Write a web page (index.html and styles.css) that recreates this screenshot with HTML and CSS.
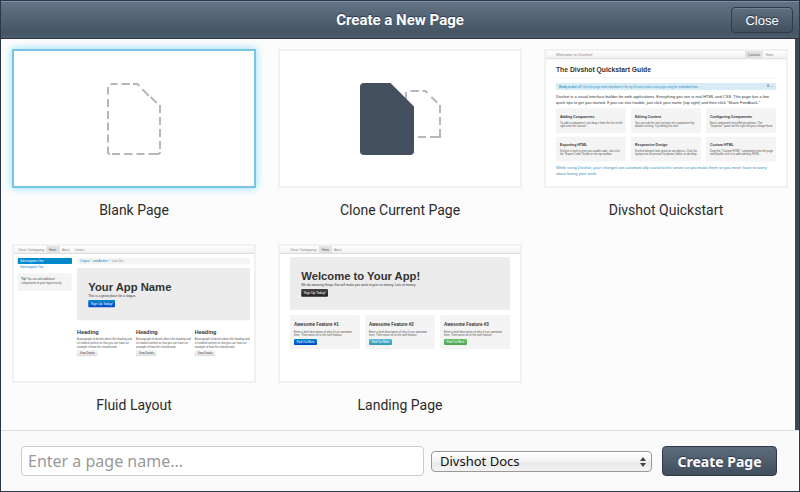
FILE: index.html
```html
<!DOCTYPE html>
<html lang="en">
<head>
<meta charset="utf-8">
<title>Create a New Page</title>
<link rel="stylesheet" href="styles.css">
</head>
<body>
<form class="dialog">
  <header class="titlebar">
    <h1 class="title">Create a New Page</h1>
    <button class="close" type="button">Close</button>
  </header>

  <main class="templates">
    <label class="card">
      <input class="pick" type="radio" name="template" checked>
      <svg class="thumb" viewBox="0 0 240 135" aria-hidden="true">
        <path class="dash" d="M94 36v7.500M94 48v8M94 60v8M94 71.500v8M94 83.500v8M94 95.500v5.500q0 2 2 2M96.500 33h7M107.500 33h8.500M119 33h4.500l2 2M128.300 38.300l6.400 6.400M136.700 46l6 6M146 54v8M146 66v8M146 78v8M146 90v8M98 103h8M110 103h8.500M122.500 103h8M134.500 103h9.500q2 0 2-2"/>
      </svg>
      <span class="name">Blank Page</span>
    </label>

    <label class="card">
      <input class="pick" type="radio" name="template">
      <svg class="thumb" viewBox="0 0 240 135" aria-hidden="true">
        <path class="dash" d="M126 41v7.500M130.500 40h8.500M142.500 40h3l2 2M151.300 46l6 5.700M160 54v8M160 66v8M160 78v8h-10M138 86h8"/>
        <path class="solid" d="M84 32h26.500L134 55.500V100q0 4-4 4H84q-4 0-4-4V36q0-4 4-4z"/>
      </svg>
      <span class="name">Clone Current Page</span>
    </label>

    <label class="card">
      <input class="pick" type="radio" name="template">
      <svg class="thumb" viewBox="0 0 960 540" aria-hidden="true">
        <defs>
          <linearGradient id="nav" x2="0" y2="1"><stop stop-color="#fff"/><stop offset="1" stop-color="#f0f0f0"/></linearGradient>
          <linearGradient id="blue" x2="0" y2="1"><stop stop-color="#0088cc"/><stop offset="1" stop-color="#0044cc"/></linearGradient>
          <linearGradient id="dark" x2="0" y2="1"><stop stop-color="#444"/><stop offset="1" stop-color="#222"/></linearGradient>
          <linearGradient id="cyan" x2="0" y2="1"><stop stop-color="#5bc0de"/><stop offset="1" stop-color="#2f96b4"/></linearGradient>
          <linearGradient id="green" x2="0" y2="1"><stop stop-color="#62c462"/><stop offset="1" stop-color="#51a351"/></linearGradient>
          <linearGradient id="plain" x2="0" y2="1"><stop stop-color="#fff"/><stop offset="1" stop-color="#dedede"/></linearGradient>
        </defs>
        <rect width="960" height="30" fill="url(#nav)"/><rect y="29" width="960" height="4" fill="#dcdcdc"/>
        <rect x="796" width="71" height="29" fill="#e2e2e2"/>
        <text class="t16 grey" x="40" y="20">Welcome to Divshot!</text>
        <text class="t11 mid" x="807" y="18">Quickstart</text>
        <text class="t11 grey" x="879" y="18">Home</text>
        <text class="t27 bold" x="40" y="85">The Divshot Quickstart Guide</text>
        <rect x="40" y="106" width="880" height="2" fill="#eee"/>
        <rect class="notice" x="40" y="128" width="880" height="28" rx="4"/>
        <text class="t11 teal" x="52" y="146"><tspan class="bold">Ready to dive in?</tspan> Click the page name dropdown in the top left and create a new page using the embedded form.</text>
        <text class="t16 grey" x="883" y="145">Ã—</text>
        <text class="t16" x="40" y="189">Divshot is a visual interface builder for web applications. Everything you see is real HTML and CSS. This page has a few</text>
        <text class="t16" x="40" y="211">quick tips to get you started. If you run into trouble, just click your name (top right) and then click "Share Feedback."</text>
        <g class="wells">
          <rect x="40" y="229" width="280" height="99" rx="4"/><rect x="340" y="229" width="280" height="99" rx="4"/><rect x="640" y="229" width="280" height="99" rx="4"/>
          <rect x="40" y="343" width="280" height="99" rx="4"/><rect x="340" y="343" width="280" height="99" rx="4"/><rect x="640" y="343" width="280" height="99" rx="4"/>
        </g>
        <g class="t14 bold">
          <text x="56" y="266">Adding Components</text><text x="356" y="266">Editing Content</text><text x="656" y="266">Configuring Components</text>
          <text x="56" y="378">Exporting HTML</text><text x="356" y="378">Responsive Design</text><text x="656" y="378">Custom HTML</text>
        </g>
        <g class="t11 body">
          <text x="56" y="290">To add a component, just drag it from the list on the</text><text x="56" y="305">right onto the canvas.</text>
          <text x="356" y="290">You can edit the text sections of a component by</text><text x="356" y="305">double-clicking. Try editing this text!</text>
          <text x="656" y="290">Each component has different options. The</text><text x="656" y="305">"Inspector" panel on the right lets you change them.</text>
          <text x="56" y="402">Divshot is built to give you usable code. Just click</text><text x="56" y="417">the "Export Code" button in the top toolbar.</text>
          <text x="356" y="402">Divshot designs look great on any device. Click the</text><text x="356" y="417">laptop icon to preview for phone, tablet, or desktop.</text>
          <text x="656" y="402">Drag the "Custom HTML" component onto the page</text><text x="656" y="417">and double click it to add arbitrary HTML.</text>
        </g>
        <text class="t16 teal" x="40" y="473">While using Divshot, your changes are automatically saved to the server as you make them so you never have to worry</text>
        <text class="t16 teal" x="40" y="495">about losing your work.</text>
      </svg>
      <span class="name">Divshot Quickstart</span>
    </label>

    <label class="card">
      <input class="pick" type="radio" name="template">
      <svg class="thumb" viewBox="0 0 960 540" aria-hidden="true">
        <rect width="960" height="28" fill="url(#nav)"/><rect y="28" width="960" height="4" fill="#dcdcdc"/>
        <rect x="129" width="55" height="28" fill="#e2e2e2"/>
        <text class="t16 grey" x="16" y="21">Your Company</text>
        <text class="t11 mid" x="140" y="19">Home</text><text class="t11 grey" x="192" y="19">About</text><text class="t11 grey" x="243" y="19">Contact</text>
        <rect x="15" y="48" width="217" height="24" rx="3" fill="#0088cc"/>
        <text class="t11 white" x="24" y="63">Subnavigation One</text>
        <text class="t11 link" x="24" y="88">Subnavigation Two</text>
        <g class="wells"><rect x="15" y="109" width="216" height="71" rx="5"/><rect x="252" y="47" width="692" height="26" rx="4"/></g>
        <text class="t11 body" x="29" y="137"><tspan class="bold">Tip!</tspan> You can add additional</text>
        <text class="t11 body" x="29" y="152">components to your layout easily.</text>
        <text class="t11 link" x="264" y="64">Original</text><text class="t11 grey" x="307" y="64">/</text><text class="t11 link" x="316" y="64">and Another</text><text class="t11 grey" x="382" y="64">/</text><text class="t11 grey" x="392" y="64">Last One</text>
        <rect class="hero" x="252" y="88" width="692" height="209" rx="6"/>
        <text class="t45 bold" x="297" y="180">Your App Name</text>
        <text class="t13" x="297" y="202">This is a great place for a slogan.</text>
        <rect x="297" y="216" width="107" height="29" rx="4" fill="url(#blue)"/>
        <text class="t13 white" x="307" y="235">Sign Up Today!</text>
        <g class="t22 bold"><text x="252" y="351">Heading</text><text x="488" y="351">Heading</text><text x="723" y="351">Heading</text></g>
        <g class="t11 body">
          <text x="252" y="377">A paragraph of details about the heading and</text><text x="252" y="392">its related content so that you can have an</text><text x="252" y="406">example of how this should work.</text>
          <text x="488" y="377">A paragraph of details about the heading and</text><text x="488" y="392">its related content so that you can have an</text><text x="488" y="406">example of how this should work.</text>
          <text x="723" y="377">A paragraph of details about the heading and</text><text x="723" y="392">its related content so that you can have an</text><text x="723" y="406">example of how this should work.</text>
        </g>
        <g class="plain"><rect x="252" y="418" width="81" height="22" rx="4"/><rect x="488" y="418" width="81" height="22" rx="4"/><rect x="723" y="418" width="81" height="22" rx="4"/></g>
        <g class="t11"><text x="263" y="433">View Details</text><text x="499" y="433">View Details</text><text x="734" y="433">View Details</text></g>
      </svg>
      <span class="name">Fluid Layout</span>
    </label>

    <label class="card">
      <input class="pick" type="radio" name="template">
      <svg class="thumb" viewBox="0 0 960 540" aria-hidden="true">
        <rect width="960" height="28" fill="url(#nav)"/><rect y="28" width="960" height="4" fill="#dcdcdc"/>
        <rect x="156" width="52" height="28" fill="#e2e2e2"/>
        <text class="t16 grey" x="41" y="21">Your Company</text>
        <text class="t11 mid" x="168" y="19">Home</text><text class="t11 grey" x="216" y="19">About</text>
        <rect class="hero" x="40" y="44" width="880" height="211" rx="6"/>
        <text class="t45 bold" x="85" y="136">Welcome to Your App!</text>
        <text class="t13" x="85" y="158">We do amazing things that will make you want to give us money. Lots of money.</text>
        <rect x="85" y="172" width="107" height="31" rx="4" fill="url(#dark)"/>
        <text class="t13 white" x="95" y="192">Sign Up Today!</text>
        <g class="wells"><rect x="40" y="276" width="280" height="136" rx="4"/><rect x="340" y="276" width="280" height="136" rx="4"/><rect x="640" y="276" width="280" height="136" rx="4"/></g>
        <g class="t18 bold"><text x="56" y="320">Awesome Feature #1</text><text x="356" y="320">Awesome Feature #2</text><text x="656" y="320">Awesome Feature #3</text></g>
        <g class="t11 body">
          <text x="56" y="347">Enter a brief description of why it's an awesome</text><text x="56" y="361">here. Then move on to the next feature.</text>
          <text x="356" y="347">Enter a brief description of why it's an awesome</text><text x="356" y="361">here. Then move on to the next feature.</text>
          <text x="656" y="347">Enter a brief description of why it's an awesome</text><text x="656" y="361">here. Then move on to the next feature.</text>
        </g>
        <rect x="56" y="372" width="92" height="24" rx="4" fill="url(#blue)"/><rect x="356" y="372" width="92" height="24" rx="4" fill="url(#cyan)"/><rect x="656" y="372" width="92" height="24" rx="4" fill="url(#green)"/>
        <g class="t11 white"><text x="67" y="388">Find Out More</text><text x="367" y="388">Find Out More</text><text x="667" y="388">Find Out More</text></g>
      </svg>
      <span class="name">Landing Page</span>
    </label>
  </main>

  <footer class="actions">
    <input class="page-name" type="text" placeholder="Enter a page name..." aria-label="Page name">
    <div class="project">
      <select class="project-select" aria-label="Project"><option>Divshot Docs</option></select>
      <svg class="arrows" viewBox="0 0 6 12" aria-hidden="true"><path d="M3 1l3 4H0zM3 11l3-4H0z"/></svg>
    </div>
    <button class="create" type="submit">Create Page</button>
  </footer>
</form>
</body>
</html>
```
FILE: styles.css
```css
* {
  box-sizing: border-box;
}

body {
  margin: 0;
  font-family: Roboto, "Liberation Sans", sans-serif;
  color: #2b2b2b;
}

.dialog {
  display: flex;
  flex-direction: column;
  min-height: 100vh;
  border: 1px solid #2a364b;
  background: #fcfcfc;
}

/* Title bar */
.titlebar {
  display: grid;
  grid-template-columns: 1fr auto 1fr;
  align-items: center;
  height: 38px;
  padding: 0 6px;
  border-top: 1px solid #8390a0;
  border-bottom: 1px solid #2a364b;
  background: linear-gradient(#637385, #465563 85%, #4d5c6b);
}

.title {
  grid-column: 2;
  margin: 0;
  font-size: 15px;
  line-height: 20px;
  font-weight: 700;
  color: #fff;
  text-shadow: 0 -1px 1px #2a364b;
}

.close,
.create {
  border: 1px solid #2f3b4b;
  border-radius: 4px;
  color: #fff;
  text-shadow: 0 -1px 1px #2a364b;
}

.close {
  justify-self: end;
  width: 62px;
  height: 26px;
  padding: 0;
  font: 13px "Liberation Sans", sans-serif;
  background: linear-gradient(#5f6f80, #424f5d);
  box-shadow: inset 0 1px 0 #718092;
}

/* Template grid */
.templates {
  flex: 1;
  display: grid;
  grid-template-columns: repeat(3, 1fr);
  align-content: start;
  gap: 24px 22px;
  padding: 10px 7px 15px 11px;
  border-right: 4px solid #3d4754;
}

.card {
  position: relative;
  display: flex;
  flex-direction: column;
  gap: 12px;
}

.pick {
  position: absolute;
  margin: 0;
  opacity: 0;
}

.thumb {
  display: block;
  width: 100%;
  border: 2px solid #f1f1f1;
  background: #fff;
  font-family: "Liberation Sans", sans-serif;
  fill: #333;
}

.pick:checked + .thumb {
  border-color: #79c6e4;
  box-shadow: 0 0 8px #8bdcff;
}

.name {
  font-size: 14px;
  line-height: 20px;
  text-align: center;
}

/* Thumbnail drawings */
.dash {
  fill: none;
  stroke: #b4b8be;
  stroke-width: 2;
}

.solid { fill: #44505e; }
.wells { fill: #f4f4f4; }
.hero { fill: #ececec; }
.notice { fill: #d6ebf6; }
.plain { fill: url(#plain); stroke: #ccc; }
.bold { font-weight: 700; }
.body { fill: #555; }
.grey { fill: #888; }
.mid { fill: #555; }
.white { fill: #fff; }
.teal { fill: #3a93bd; }
.link { fill: #0088cc; }
.t11 { font-size: 11px; }
.t13 { font-size: 13px; }
.t14 { font-size: 14px; }
.t16 { font-size: 16px; }
.t18 { font-size: 18px; }
.t22 { font-size: 22px; }
.t27 { font-size: 27px; }
.t45 { font-size: 45px; }

/* Footer */
.actions {
  display: flex;
  align-items: center;
  padding: 15px 22px 15px 20px;
  border-top: 1px solid #dedede;
  background: #fafafa;
  font-family: "Noto Sans", sans-serif;
}

.page-name {
  flex: 1;
  min-width: 0;
  height: 30px;
  padding: 0 6px;
  border: 1px solid #ccc;
  border-radius: 4px;
  background: #fff;
  font: 16px "Noto Sans", sans-serif;
  color: #333;
}

.page-name::placeholder {
  color: #999;
}

.project {
  position: relative;
  width: 221px;
  margin: 0 10px 0 7px;
}

.project-select {
  display: block;
  appearance: none;
  width: 100%;
  height: 21px;
  padding: 0 20px 0 8px;
  border: 1px solid #999;
  border-radius: 4px;
  background: linear-gradient(#fff, #f3f3f3 50%, #e9e9e9 51%, #f2f2f2);
  font: 13px "Noto Sans", sans-serif;
  line-height: 19px;
  color: #111;
}

.arrows {
  position: absolute;
  top: 5px;
  right: 6px;
  width: 6px;
  fill: #444;
  pointer-events: none;
}

.create {
  width: 115px;
  height: 30px;
  padding: 0;
  font: 700 14px "Noto Sans", sans-serif;
  background: linear-gradient(#5d6b7b, #414e5d);
}
```
